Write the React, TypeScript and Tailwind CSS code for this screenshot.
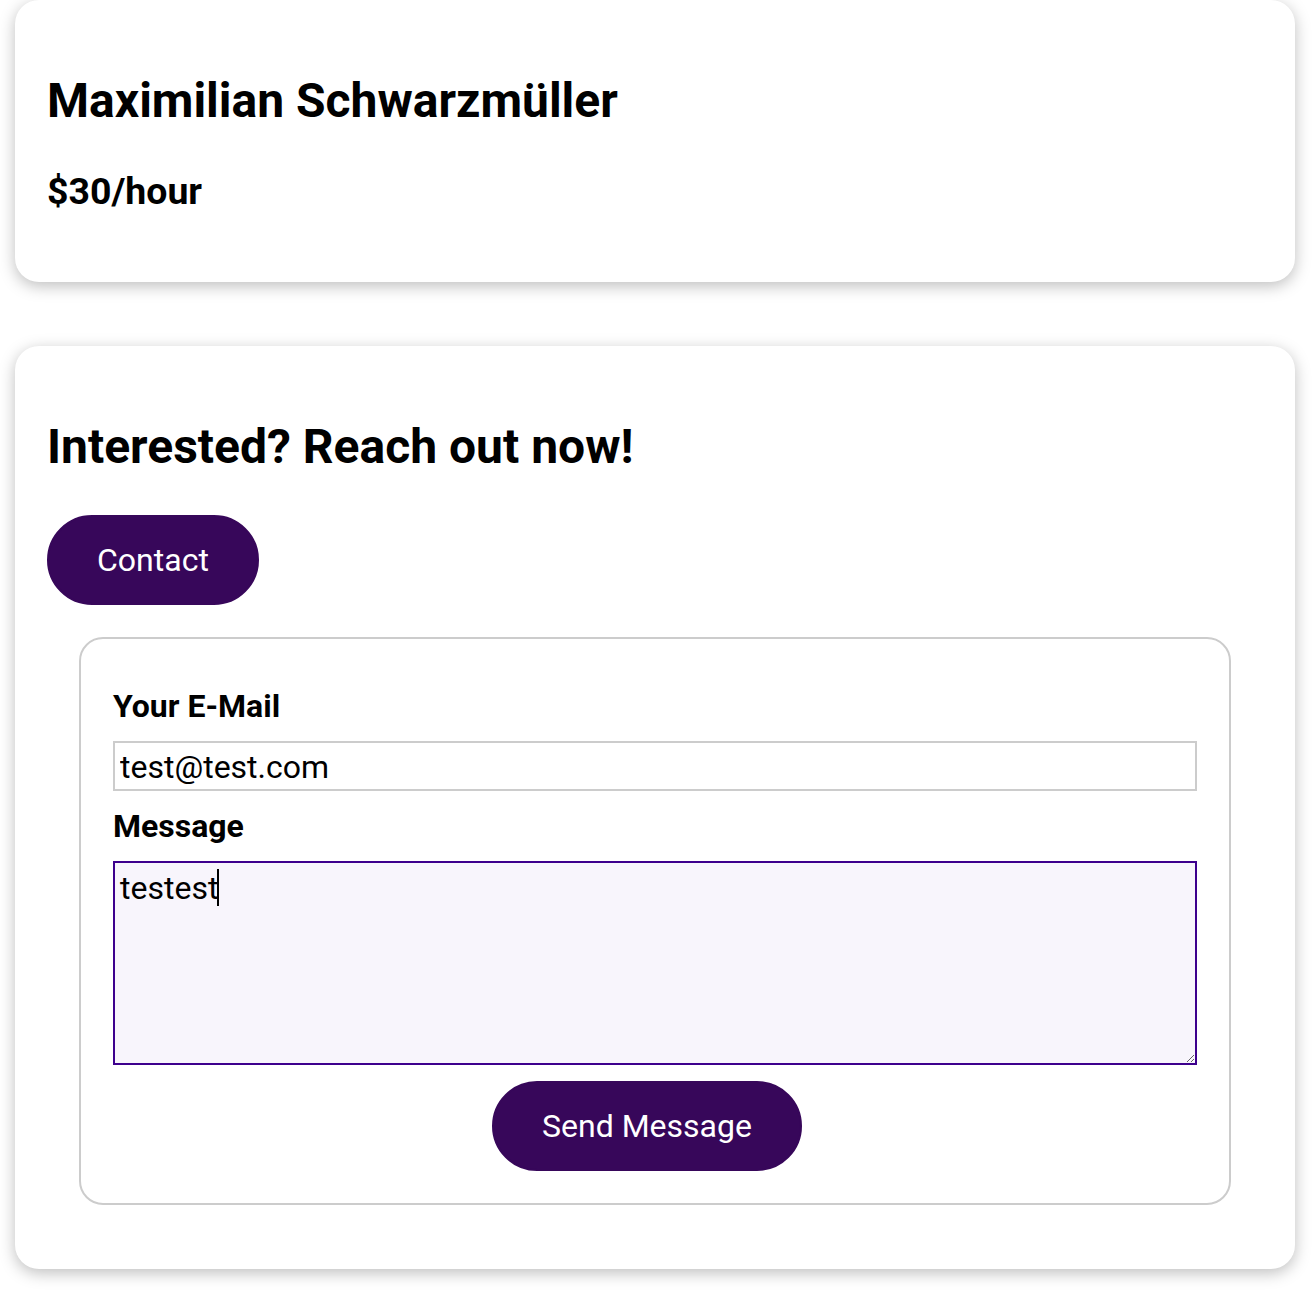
import React from "react"

const Card = ({ children, className = "" }: { children: React.ReactNode; className?: string }) => (
  <section className={`rounded-[24px] bg-white p-8 shadow-[0_4px_16px_rgba(0,0,0,0.26)] ${className}`}>
    {children}
  </section>
)

const Button = ({ children }: { children: React.ReactNode }) => (
  <a
    href="#"
    className="inline-block rounded-[60px] border-2 border-[#37075a] bg-[#37075a] px-12 py-6 text-[32px] leading-[normal] text-white no-underline"
  >
    {children}
  </a>
)

const ContactForm = () => {
  return (
    <form className="m-8 rounded-[24px] border-2 border-[#ccc] p-8" onSubmit={(e) => e.preventDefault()}>
      <div className="my-4">
        <label htmlFor="email" className="mb-4 block text-[32px] font-bold leading-[normal]">
          Your E-Mail
        </label>
        <input
          id="email"
          type="email"
          defaultValue="test@test.com"
          className="block w-full border-2 border-[#ccc] bg-white px-[5px] pt-[5px] pb-[3px] text-[32px] leading-[normal] outline-none"
        />
      </div>
      <div className="my-4">
        <label htmlFor="message" className="mb-4 block text-[32px] font-bold leading-[normal]">
          Message
        </label>
        <div className="relative">
          <textarea
            id="message"
            rows={5}
            defaultValue="testest"
            className="block h-[204px] w-full border-2 border-[#3d008d] bg-[#f8f5fc] px-[5px] pt-[6px] pb-[2px] text-[32px] leading-[normal] outline-none"
          />
          {/* text caret, as in the focused field */}
          <span className="pointer-events-none absolute left-[104px] top-[8px] h-[37px] w-[2px] bg-black" />
        </div>
      </div>
      <div className="mr-4 flex justify-center">
        <Button>Send Message</Button>
      </div>
    </form>
  )
}

const App = () => {
  return (
    <div className="min-h-screen bg-white font-['Roboto',sans-serif] text-black">
      <div className="ml-[15px] w-[1280px] pb-[22px]">
        <Card>
          <h2 className="my-10 text-[48px] font-bold leading-[normal]">Maximilian Schwarzmüller</h2>
          <h3 className="my-[37.44px] text-[37.44px] font-bold leading-[normal]">$30/hour</h3>
        </Card>

        <Card className="mt-16">
          <h2 className="my-10 text-[48px] font-bold leading-[normal]">Interested? Reach out now!</h2>
          <Button>Contact</Button>
          <ContactForm />
        </Card>
      </div>
    </div>
  )
}

export default App
